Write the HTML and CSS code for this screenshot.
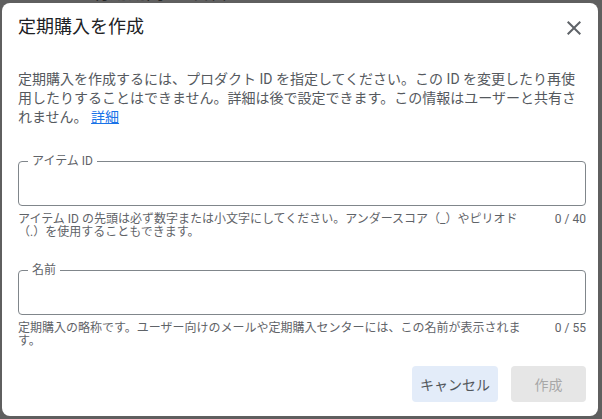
FILE: index.html
```html
<!DOCTYPE html>
<html lang="ja">
<head>
<meta charset="utf-8">
<title>定期購入を作成</title>
<link rel="stylesheet" href="styles.css">
</head>
<body>
<div class="page">
  <div class="page-text">有効期間は1日目</div>
</div>
<div class="dialog" role="dialog">
  <header class="dlg-head">
    <h2 class="dlg-title">定期購入を作成</h2>
    <button class="close" aria-label="閉じる">
      <svg viewBox="0 0 24 24" width="24" height="24"><path d="M19 6.41L17.59 5 12 10.59 6.41 5 5 6.41 10.59 12 5 17.59 6.41 19 12 13.41 17.59 19 19 17.59 13.41 12z" fill="#5f6368"/></svg>
    </button>
  </header>
  <p class="desc">定期購入を作成するには、プロダクト ID を指定してください。この ID を変更したり再使用したりすることはできません。詳細は後で設定できます。この情報はユーザーと共有されません。 <a href="#" class="link">詳細</a></p>

  <div class="field field-first">
    <fieldset class="box">
      <legend class="label">アイテム ID</legend>
      <input class="input" type="text">
    </fieldset>
    <div class="hint">
      <span class="hint-text">アイテム ID の先頭は必ず数字または小文字にしてください。アンダースコア（_）やピリオド<br>（.）を使用することもできます。</span>
      <span class="count">0 / 40</span>
    </div>
  </div>

  <div class="field">
    <fieldset class="box">
      <legend class="label">名前</legend>
      <input class="input" type="text">
    </fieldset>
    <div class="hint">
      <span class="hint-text">定期購入の略称です。ユーザー向けのメールや定期購入センターには、この名前が表示されます。</span>
      <span class="count">0 / 55</span>
    </div>
  </div>

  <div class="actions">
    <button class="btn btn-tonal">キャンセル</button>
    <button class="btn btn-disabled" disabled>作成</button>
  </div>
</div>
</body>
</html>
```

FILE: styles.css
```css
html, body {
  margin: 0;
  padding: 0;
}
body {
  background: #5f5f5f;
  font-family: Roboto, "Noto Sans CJK JP", sans-serif;
  width: 602px;
  height: 419px;
  overflow: hidden;
  position: relative;
}
.page {
  padding-left: 92px;
  height: 3px;
  overflow: hidden;
}
.page-text {
  margin-top: -17px;
  font-size: 18px;
  line-height: 20px;
  color: #262626;
}
.dialog {
  position: absolute;
  left: 2px;
  top: 3px;
  width: 596px;
  height: 413px;
  box-sizing: border-box;
  background: #fff;
  border-radius: 8px;
  padding: 11px 12px 13px 16px;
  display: flex;
  flex-direction: column;
}
.dlg-head {
  display: flex;
  align-items: center;
  justify-content: space-between;
}
.dlg-title {
  margin: 0;
  font-size: 18px;
  line-height: 24px;
  font-weight: 400;
  color: #202124;
}
.close {
  border: 0;
  background: none;
  padding: 0;
  width: 24px;
  height: 24px;
  display: flex;
  margin-top: 2px;
}
.desc {
  margin: 30px 0 0;
  font-size: 14px;
  line-height: 19px;
  color: #55595e;
}
.link {
  color: #1a73e8;
  text-decoration: underline;
}
.field {
  margin-top: 23px;
}
.field-first {
  margin-top: 26px;
}
.box {
  margin: 0;
  padding: 0 9px;
  border: 1px solid #80868b;
  border-radius: 4px;
  min-width: 0;
}
.label {
  padding: 0 4px;
  font-size: 12px;
  line-height: 16px;
  color: #5f6368;
}
.input {
  display: block;
  width: 100%;
  height: 36px;
  border: 0;
  padding: 0;
  margin: 0;
  outline: none;
  background: transparent;
  font: inherit;
}
.hint {
  display: flex;
  align-items: flex-start;
  margin-top: 7px;
  font-size: 12px;
  line-height: 13px;
  color: #5f6368;
}
.hint-text {
  flex: 1;
  min-width: 0;
}
.count {
  margin-left: 16px;
  white-space: nowrap;
}
.actions {
  margin-top: 18px;
  display: flex;
  justify-content: flex-end;
  gap: 13px;
}
.btn {
  height: 36px;
  border: 0;
  border-radius: 4px;
  font-family: inherit;
  font-size: 14px;
  padding: 0 8px;
}
.btn-tonal {
  background: #e3ecf9;
  color: #51565b;
  width: 86px;
}
.btn-disabled {
  background: #e6e6e6;
  color: #a8a8a8;
  width: 75px;
}
```
